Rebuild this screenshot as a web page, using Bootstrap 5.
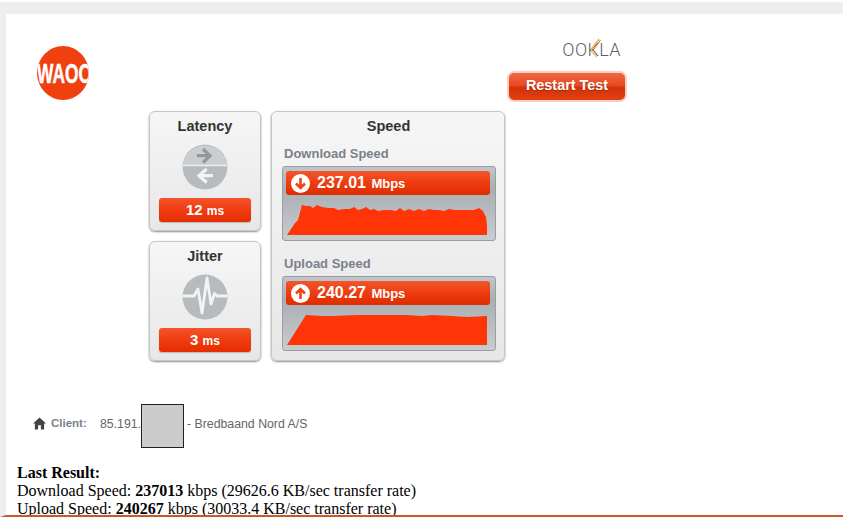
<!DOCTYPE html>
<html lang="en">
<head>
    <meta charset="UTF-8">
    <meta name="viewport" content="width=device-width, initial-scale=1.0">
    <title>Speed test</title>
    <link href="https://cdn.jsdelivr.net/npm/bootstrap@5.3.0/dist/css/bootstrap.min.css" rel="stylesheet">
    <style>
        html, body { height: 519px; overflow: hidden; background: #fff; }
        body { font-family: "Liberation Sans", Arial, sans-serif; color: #333; }
        .frame { width: 843px; height: 515px; margin-top: 2px; overflow: hidden; border-top: 12px solid #eee; border-left: 6px solid #eee; border-bottom: 2px solid #c8572a; }
        .top-row { height: 97px; padding: 26px 216px 0 31px; }
        .logo-waoo { width: 52px; height: 54px; display: block; margin-top: 6px; }
        .ookla-col { width: 120px; }
        .ookla-word { position: relative; font-family: Roboto, "Liberation Sans", sans-serif; font-size: 18px; line-height: 20px; font-weight: 300; letter-spacing: .4px; color: #5f5f5f; height: 20px; padding-right: 6px; }
        .ookla-k { position: absolute; left: 79px; top: -3px; width: 18px; height: 24px; }
        .restart-btn { display: block; width: 120px; height: 31px; margin-top: 11px; padding: 0 0 2px; border-radius: 7px; border: 2px solid #fbd0be; background: linear-gradient(#ee6a44 0%, #e9481f 46%, #d2330b 54%, #e24013 100%); color: #fff; font-weight: 700; font-size: 14.4px; line-height: 23px; text-shadow: 0 1px 1px rgba(120, 30, 0, .5); }
        .dash { padding-left: 143px; gap: 10px; }
        .dash-col { gap: 10px; }
        .panel-box { background: linear-gradient(#f6f6f6, #e7e7e7); border: 1px solid #c3c7ca; border-radius: 6px; box-shadow: 0 1px 2px rgba(0, 0, 0, .45); color: #333; }
        .small-panel { width: 112px; height: 120px; padding: 6px 9px 0; }
        .speed-panel { width: 234px; height: 250px; padding: 6px 9px 0 10px; }
        .panel-title { font-size: 14.500px; line-height: 17px; font-weight: 700; text-align: center; }
        .gauge-icon { width: 46px; height: 46px; display: block; margin: 9px auto 8px; }
        .value-pill { height: 24px; border-radius: 3px; background: linear-gradient(#f2552c 0%, #f03c10 50%, #e52e00 100%); color: #fff; font-weight: 700; font-size: 15px; line-height: 24px; text-align: center; box-shadow: 0 1px 1px rgba(0, 0, 0, .2); }
        .value-pill .unit-txt { font-size: 12px; }
        .speed-label { font-size: 13px; line-height: 16px; font-weight: 700; color: #7b818a; margin: 11px 0 4px 2px; }
        .speed-label.upload-lbl { margin-top: 15px; }
        .graph-box { width: 214px; height: 75px; padding: 4px 5px 0 3px; border: 1px solid #999ea3; border-radius: 3px; background: linear-gradient(#c2c6ca, #a9aeb3 30%, #c9ccce 100%); }
        .speed-bar { height: 24px; border-radius: 3px; background: linear-gradient(#f2552c 0%, #ee3c10 50%, #dd2c00 100%); color: #fff; font-weight: 700; font-size: 16px; line-height: 24px; gap: 7px; padding-left: 5px; }
        .speed-bar .unit-txt { font-size: 13px; margin-left: 1px; }
        .arrow-icon { width: 19px; height: 19px; flex: none; }
        .graph-svg { display: block; width: 204px; height: 41px; }
        .client-row { margin-top: 43px; padding-left: 27px; height: 44px; font-size: 12.300px; color: #666; }
        .client-row span { margin-top: -4px; }
        .home-icon { width: 13px; height: 13px; margin-right: 5px; margin-top: -5px; }
        .client-lbl { font-weight: 700; color: #7b818a; width: 49px; font-size: 11.500px; }
        .ip-hide { width: 43px; height: 44px; background: #ccc; border: 1px solid #222; margin: 0 3px 0 0; }
        .last-result { font-family: "Liberation Serif", "Times New Roman", serif; font-size: 16px; line-height: 18px; color: #000; padding-left: 11px; margin-top: 16px; }
    </style>
</head>
<body>
    <div class="frame">
        <div class="top-row d-flex justify-content-between">
            <svg class="logo-waoo" viewBox="0 0 52 54">
                <defs><clipPath id="logoClip"><ellipse cx="26" cy="27" rx="26" ry="27"/></clipPath></defs>
                <ellipse cx="26" cy="27" rx="26" ry="27" fill="#f0400f"/>
                <g clip-path="url(#logoClip)">
                    <text x="0" y="37" textLength="55" lengthAdjust="spacingAndGlyphs" font-family="Liberation Sans" font-weight="700" font-size="27" fill="#fff" stroke="#fff" stroke-width=".5">WAOO</text>
                </g>
            </svg>
            <div class="ookla-col">
                <div class="ookla-word text-end">OOKLA
                    <svg class="ookla-k" viewBox="0 0 18 24">
                        <path d="M5 13 L13 2" stroke="#e8b24c" stroke-width="1.400" fill="none"/>
                        <path d="M6.500 14 L14.500 3" stroke="#d0583c" stroke-width="1" fill="none"/>
                        <path d="M5 14 L11 20" stroke="#e8c070" stroke-width="1.400" fill="none"/>
                    </svg>
                </div>
                <button type="button" class="btn restart-btn">Restart Test</button>
            </div>
        </div>

        <div class="dash d-flex">
            <div class="dash-col d-flex flex-column">
                <div class="panel-box small-panel">
                    <div class="panel-title">Latency</div>
                    <svg class="gauge-icon" viewBox="0 0 46 46">
                        <circle cx="23" cy="23" r="22.500" fill="#b7bbbd"/>
                        <path d="M0.700 21 A 22.500 22.500 0 0 1 45.300 21 Z" fill="#cbced0"/>
                        <path d="M1 21.500 h44" stroke="#eceded" stroke-width="1.400"/>
                        <path d="M15 11.700 H27 M21 5 L28 11.700 L21 18.500" fill="none" stroke="#93989b" stroke-width="3.200"/>
                        <path d="M31 31.700 H17 M24.700 25 L17 31.700 L24.700 38.500" fill="none" stroke="#f2f3f3" stroke-width="3.200"/>
                    </svg>
                    <div class="value-pill">12 <span class="unit-txt">ms</span></div>
                </div>
                <div class="panel-box small-panel">
                    <div class="panel-title">Jitter</div>
                    <svg class="gauge-icon" viewBox="0 0 46 46">
                        <circle cx="23" cy="23" r="22.500" fill="#b7bbbd"/>
                        <path d="M0.500 22 H12 L16 15 L20 39 L25 4 L29 30 L32.500 19.500 L35 22 H45.500" fill="none" stroke="#f2f3f3" stroke-width="2.800" stroke-linejoin="round"/>
                    </svg>
                    <div class="value-pill">3 <span class="unit-txt">ms</span></div>
                </div>
            </div>
            <div class="panel-box speed-panel">
                <div class="panel-title">Speed</div>
                <div class="speed-label">Download Speed</div>
                <div class="graph-box">
                    <div class="speed-bar d-flex align-items-center">
                        <svg class="arrow-icon" viewBox="0 0 19 19">
                            <circle cx="9.500" cy="9.500" r="9.500" fill="#fff"/>
                            <path d="M9.500 4 V14 M5 9.500 L9.500 14 L14 9.500" fill="none" stroke="#ef4415" stroke-width="2.600"/>
                        </svg>
                        <span>237.01 <span class="unit-txt">Mbps</span></span>
                    </div>
                    <svg class="graph-svg" viewBox="0 0 204 41">
                        <path d="M1 40 L9 28 L12 25 L16 10 L20 11 L24 11 L27 13 L31 10 L36 12 L42 13 L48 13 L52 15 L58 14 L64 14 L68 12 L72 15 L76 14 L80 12 L84 15 L88 14 L92 16 L98 15 L104 15 L110 16 L114 13 L118 16 L123 14 L128 16 L133 14 L138 16 L143 14 L148 15 L153 15 L158 16 L163 14 L168 15 L178 15 L188 15 L193 13 L197 16 L200 22 L201 30 L201 40 Z" fill="#ff3508"/>
                    </svg>
                </div>
                <div class="speed-label upload-lbl">Upload Speed</div>
                <div class="graph-box">
                    <div class="speed-bar d-flex align-items-center">
                        <svg class="arrow-icon" viewBox="0 0 19 19">
                            <circle cx="9.500" cy="9.500" r="9.500" fill="#fff"/>
                            <path d="M9.500 15 V5 M5 9.500 L9.500 5 L14 9.500" fill="none" stroke="#ef4415" stroke-width="2.600"/>
                        </svg>
                        <span>240.27 <span class="unit-txt">Mbps</span></span>
                    </div>
                    <svg class="graph-svg" viewBox="0 0 204 41">
                        <path d="M1 40 L20 10 L36 11 L46 11 L71 10 L91 10 L121 10 L136 11 L146 10 L166 11 L181 12 L201 11 L201 40 Z" fill="#ff3508"/>
                    </svg>
                </div>
            </div>
        </div>

        <div class="client-row d-flex align-items-center">
            <svg class="home-icon" viewBox="0 0 14 13">
                <path d="M7 0 L14 6.500 H12 V13 H8.500 V8.500 H5.500 V13 H2 V6.500 H0 Z" fill="#444"/>
            </svg>
            <span class="client-lbl">Client:</span>
            <span>85.191.</span>
            <div class="ip-hide"></div>
            <span>- Bredbaand Nord A/S</span>
        </div>

        <div class="last-result">
            <b>Last Result:</b><br>
            Download Speed: <b>237013</b> kbps (29626.6 KB/sec transfer rate)<br>
            Upload Speed: <b>240267</b> kbps (30033.4 KB/sec transfer rate)
        </div>
    </div>

    <script src="https://cdn.jsdelivr.net/npm/bootstrap@5.3.0/dist/js/bootstrap.bundle.min.js"></script>
</body>
</html>
